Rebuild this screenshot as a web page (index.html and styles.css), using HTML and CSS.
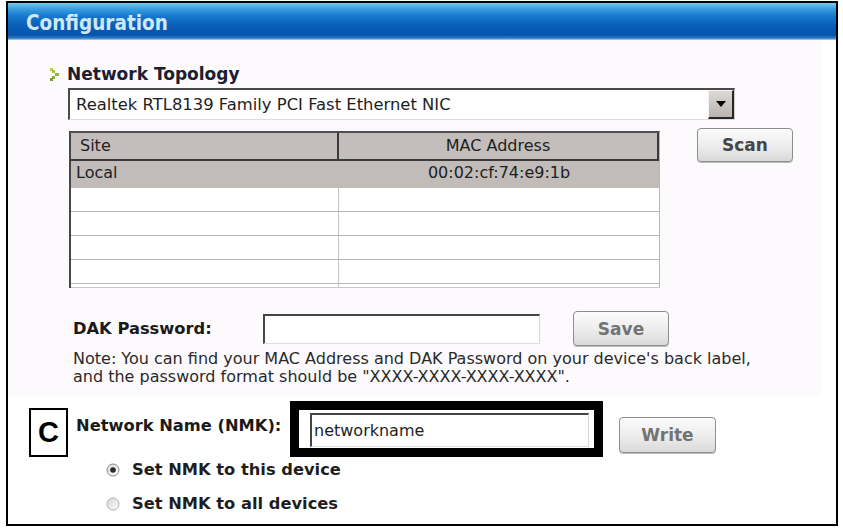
FILE: index.html
```html
<!DOCTYPE html>
<html lang="en">
<head>
<meta charset="utf-8">
<title>Configuration</title>
<link rel="stylesheet" href="styles.css">
</head>
<body>
<div class="frame">
  <div class="titlebar">Configuration</div>
  <div class="panel">
    <div class="heading">
      <svg class="bullet" width="9" height="13" viewBox="0 0 9 13">
        <rect x="0" y="0" width="3" height="3" fill="#b9d24e"/>
        <rect x="2" y="2" width="3" height="3" fill="#a3c043"/>
        <rect x="5" y="5" width="4" height="3" fill="#93b33a"/>
        <rect x="2" y="8" width="3" height="3" fill="#8aab32"/>
        <rect x="0" y="10" width="3" height="3" fill="#7c9e2c"/>
      </svg>
      <span>Network Topology</span>
    </div>
    <div class="select">
      <span class="select-text">Realtek RTL8139 Family PCI Fast Ethernet NIC</span>
      <span class="select-btn">
        <svg width="10" height="6" viewBox="0 0 10 6"><path d="M0 0 H10 L5 6 Z" fill="#000"/></svg>
      </span>
    </div>
    <div class="table-row">
      <div class="grid">
        <div class="thead">
          <div class="th c1">Site</div>
          <div class="th c2">MAC Address</div>
        </div>
        <div class="tr sel">
          <div class="td c1">Local</div>
          <div class="td c2">00:02:cf:74:e9:1b</div>
        </div>
        <div class="tr"><div class="td c1"></div><div class="td c2"></div></div>
        <div class="tr"><div class="td c1"></div><div class="td c2"></div></div>
        <div class="tr"><div class="td c1"></div><div class="td c2"></div></div>
        <div class="tr"><div class="td c1"></div><div class="td c2"></div></div>
        <div class="tr stub"><div class="td c1"></div><div class="td c2"></div></div>
      </div>
      <div class="btn scan">Scan</div>
    </div>
    <div class="dak-row">
      <span class="label dak-label">DAK Password:</span>
      <span class="field dak-field"></span>
      <div class="btn save">Save</div>
    </div>
    <p class="note">Note: You can find your MAC Address and DAK Password on your device's back label,<br>and the password format should be "XXXX-XXXX-XXXX-XXXX".</p>
  </div>
  <div class="nmk-row">
    <div class="callout">C</div>
    <span class="label nmk-label">Network Name (NMK):</span>
    <div class="highlight">
      <span class="field nmk-field">networkname</span>
    </div>
    <div class="btn write">Write</div>
  </div>
  <div class="radio-row first">
    <svg class="radio" width="14" height="14" viewBox="0 0 14 14">
      <defs><linearGradient id="rg1" x1="0" y1="0" x2="1" y2="1"><stop offset="0" stop-color="#d8d8d8"/><stop offset="1" stop-color="#ffffff"/></linearGradient></defs>
      <circle cx="7" cy="7" r="6" fill="url(#rg1)" stroke="#8a8a8a" stroke-width="1"/>
      <circle cx="7" cy="7" r="2.8" fill="#2a2a2a"/>
    </svg>
    <span class="radio-label">Set NMK to this device</span>
  </div>
  <div class="radio-row">
    <svg class="radio" width="14" height="14" viewBox="0 0 14 14">
      <defs><linearGradient id="rg2" x1="0" y1="0" x2="1" y2="1"><stop offset="0" stop-color="#d4d4d4"/><stop offset="1" stop-color="#ffffff"/></linearGradient></defs>
      <circle cx="7" cy="7" r="6" fill="url(#rg2)" stroke="#b0b0b0" stroke-width="1"/>
    </svg>
    <span class="radio-label">Set NMK to all devices</span>
  </div>
</div>
</body>
</html>
```
FILE: styles.css
```css
* { box-sizing: border-box; }
html, body { margin: 0; padding: 0; background: #ffffff; }
body { font-family: "DejaVu Sans", Verdana, sans-serif; color: #222; }

.frame {
  margin: 1px 0 0 6px;
  width: 832px;
  height: 525px;
  border: 2px solid #000;
  background: #ffffff;
  overflow: hidden;
}

.titlebar {
  height: 37px;
  padding: 4px 0 0 18px;
  line-height: 33px;
  font-family: "DejaVu Sans Condensed", "DejaVu Sans", sans-serif;
  font-weight: bold;
  font-size: 20.5px;
  color: #cfe8f8;
  background: linear-gradient(to bottom, #7ccaf0 0%, #3fa2e0 14%, #1578cc 36%, #0a5fb9 60%, #0653ab 86%, #2f7cc6 95%, #b9d8f0 100%);
}

.panel {
  margin-right: 14px;
  padding: 25px 0 10px 0;
  background: #fdfafd;
}

.heading {
  display: flex;
  align-items: center;
  height: 18px;
  padding-left: 42px;
  gap: 8px;
  font-weight: bold;
  font-size: 17px;
  line-height: 18px;
  color: #1b2030;
}

.select {
  display: flex;
  align-items: center;
  margin: 5px 0 0 60px;
  width: 667px;
  height: 32px;
  background: #fff;
  border-top: 2px solid #4a4a4a;
  border-left: 2px solid #4a4a4a;
  border-right: 1px solid #cfcfcf;
  border-bottom: 1px solid #dcdcdc;
}
.select-text {
  padding-left: 6px;
  font-size: 16.4px;
  color: #1e1e1e;
}
.select-btn {
  margin-left: auto;
  width: 26px;
  height: 29px;
  display: flex;
  align-items: center;
  justify-content: center;
  background: linear-gradient(to bottom, #dcd8d4, #b9b4b0);
  border-top: 1px solid #f4f4f4;
  border-left: 1px solid #f4f4f4;
  border-right: 2px solid #262626;
  border-bottom: 2px solid #262626;
}

.table-row {
  display: flex;
  align-items: flex-start;
  margin: 8px 0 0 61px;
}
.grid {
  margin-top: 3px;
  width: 591px;
  border-top: 2px solid #505050;
  border-left: 2px solid #474747;
  border-right: 1px solid #b8b8b8;
  background: #fff;
  font-size: 16px;
  color: #1e1e1e;
}
.thead {
  display: flex;
  height: 28px;
  background: #c3bdbb;
  border-bottom: 2px solid #3a3a3a;
}
.th { line-height: 26px; }
.thead .c1 { width: 268px; padding-left: 9px; border-right: 2px solid #3a3a3a; }
.thead .c2 { flex: 1; text-align: center; border-right: 2px solid #3a3a3a; }

.tr {
  display: flex;
  height: 24px;
  border-bottom: 1px solid #b7b7b7;
}
.tr .c1 { width: 268px; border-right: 1px solid #c6c6c6; }
.tr .c2 { flex: 1; }
.tr.sel {
  height: 27px;
  background: #c1bbb9;
  border-bottom: none;
  line-height: 24px;
}
.tr.sel .c1 { padding-left: 5px; border-right: none; }
.tr.sel .c2 { text-align: center; }
.tr.stub { height: 4px; border-bottom: 1px solid #c8c8c8; }

.btn {
  display: flex;
  align-items: center;
  justify-content: center;
  border: 1px solid #8e8e8e;
  border-radius: 4px;
  background: linear-gradient(to bottom, #fbfbfb 0%, #ececec 55%, #d9d9d9 100%);
  box-shadow: 0 1px 0 #b9b9b9;
  font-weight: bold;
  font-size: 17px;
}
.scan { margin-left: 37px; width: 96px; height: 34px; color: #464646; }
.save { margin-left: 33px; width: 96px; height: 35px; color: #737373; }
.write { margin-left: 16px; margin-top: 16px; width: 97px; height: 36px; color: #737373; }

.dak-row {
  display: flex;
  align-items: center;
  height: 35px;
  margin-top: 23px;
  padding-left: 65px;
}
.label {
  font-weight: bold;
  font-size: 16.3px;
  line-height: 18px;
  color: #1a1a1a;
}
.dak-label { width: 190px; }
.field {
  display: flex;
  align-items: center;
  background: #fff;
  border-top: 2px solid #454545;
  border-left: 2px solid #454545;
  border-right: 1px solid #d6d6d6;
  border-bottom: 1px solid #dedede;
  font-size: 16px;
  color: #1e1e1e;
}
.dak-field { width: 277px; height: 30px; }

.note {
  margin: 4px 0 0 0;
  padding-left: 65px;
  font-size: 16px;
  line-height: 18px;
  color: #2a2a2a;
}

.nmk-row {
  display: flex;
  align-items: flex-start;
  height: 56px;
  margin-top: 5px;
}
.callout {
  margin: 7px 0 0 21px;
  width: 39px;
  height: 49px;
  border: 2px solid #000;
  background: #fff;
  display: flex;
  align-items: center;
  justify-content: center;
  font-family: "Liberation Sans", Arial, sans-serif;
  font-weight: bold;
  font-size: 29px;
  color: #000;
}
.nmk-label { margin: 16px 0 0 8px; width: 214px; }
.highlight {
  width: 313px;
  height: 56px;
  border: 9px solid #000;
  background: #fff;
  padding: 3px 0 0 11px;
}
.nmk-field { width: 279px; height: 34px; padding-left: 2px; }

.radio-row {
  display: flex;
  align-items: center;
  gap: 12px;
  height: 16px;
  margin-top: 18px;
  padding-left: 98px;
}
.radio-row.first { margin-top: 5px; }
.radio-label {
  font-weight: bold;
  font-size: 16.3px;
  line-height: 16px;
  color: #1e1e1e;
}
```
